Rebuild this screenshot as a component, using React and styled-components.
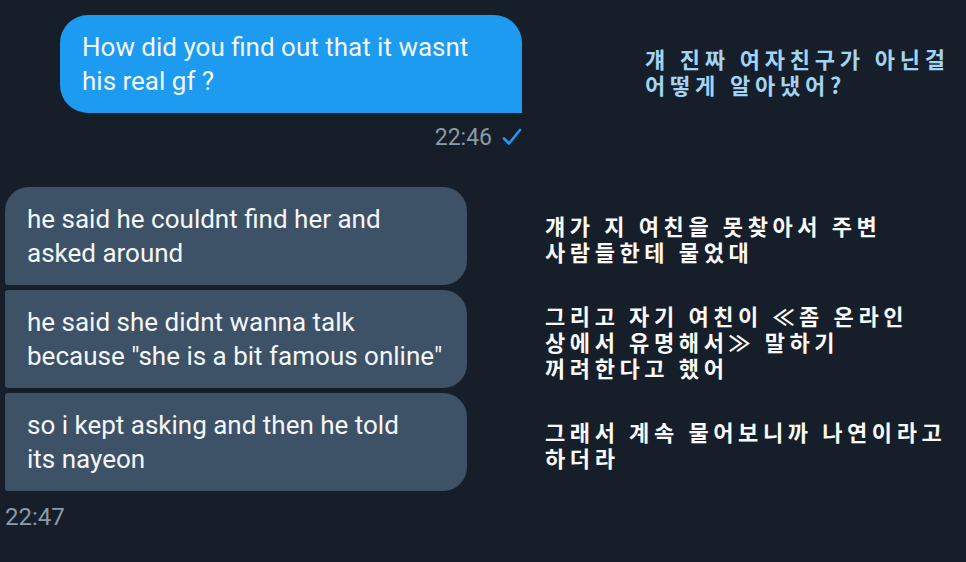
import React from "react";
import styled, { createGlobalStyle } from "styled-components";

const Global = createGlobalStyle`
  html, body { margin: 0; padding: 0; background: #161f29; }
  body { width: 966px; height: 562px; overflow: hidden; }
`;

const Page = styled.div`
  width: 966px;
  height: 562px;
  box-sizing: border-box;
  padding: 15px 0 0 5px;
  background: #161f29;
  font-family: Roboto, "Liberation Sans", sans-serif;
  display: flex;
  flex-direction: column;
`;

const Row = styled.div`
  display: flex;
  align-items: center;
`;

const Bubble = styled.div`
  box-sizing: border-box;
  width: 462px;
  min-height: 98px;
  padding: 15px 14px 15px 22px;
  font-size: 26px;
  line-height: 34px;
  color: #f4f7fa;
  background: ${(p) => (p.$sent ? "#1d9bf0" : "#3d5266")};
  margin-left: ${(p) => (p.$sent ? "55px" : "0")};
  border-radius: ${(p) =>
    p.$sent ? "28px 28px 0 28px" : p.$first ? "24px 24px 24px 3px" : "3px 24px 24px 3px"};
`;

const Translation = styled.div`
  font-family: "Noto Sans CJK KR", sans-serif;
  font-weight: 700;
  font-size: 22px;
  line-height: 26px;
  letter-spacing: ${(p) => p.$ls}px;
  white-space: nowrap;
  color: ${(p) => (p.$blue ? "#a3d4f6" : "#fafafa")};
  margin-left: ${(p) => p.$offset}px;
  margin-top: ${(p) => p.$shift || 0}px;
`;

const Meta = styled.div`
  width: 517px;
  display: flex;
  justify-content: flex-end;
  align-items: center;
  gap: 10px;
  margin-top: 10px;
  height: 28px;
  font-size: 23px;
  color: #8b9aa7;
`;

const Stack = styled.div`
  display: flex;
  flex-direction: column;
  gap: 5px;
  margin-top: 36px;
`;

const Time = styled.div`
  margin-top: 12px;
  font-size: 24px;
  line-height: 28px;
  color: #8b9aa7;
`;

const Check = () => (
  <svg width="20" height="18" viewBox="0 0 20 18" fill="none">
    <path d="M2 10.5 L7 15.5 L18 2" stroke="#1d9bf0" strokeWidth="2.6" strokeLinecap="round" strokeLinejoin="round" />
  </svg>
);

const received = [
  {
    en: ["he said he couldnt find her and", "asked around"],
    ko: ["걔가 지 여친을 못찾아서 주변", "사람들한테 물었대"],
  },
  {
    en: ["he said she didnt wanna talk", 'because "she is a bit famous online"'],
    ko: ["그리고 자기 여친이 ≪좀 온라인", "상에서 유명해서≫ 말하기", "꺼려한다고 했어"],
  },
  {
    en: ["so i kept asking and then he told", "its nayeon"],
    ko: ["그래서 계속 물어보니까 나연이라고", "하더라"],
  },
];

const Lines = ({ lines }) =>
  lines.map((l, i) => (
    <React.Fragment key={i}>
      {l}
      {i < lines.length - 1 && <br />}
    </React.Fragment>
  ));

export default function App() {
  return (
    <>
      <Global />
      <Page>
        <Row>
          <Bubble $sent>
            <Lines lines={["How did you find out that it wasnt", "his real gf ?"]} />
          </Bubble>
          <Translation $blue $offset={123} $shift={14} $ls={4.8}>
            <Lines lines={["걔 진짜 여자친구가 아닌걸", "어떻게 알아냈어?"]} />
          </Translation>
        </Row>
        <Meta>
          <span>22:46</span>
          <Check />
        </Meta>
        <Stack>
          {received.map((m, i) => (
            <Row key={i}>
              <Bubble $first={i === 0}>
                <Lines lines={m.en} />
              </Bubble>
              <Translation $offset={78} $shift={3} $ls={4.6}>
                <Lines lines={m.ko} />
              </Translation>
            </Row>
          ))}
        </Stack>
        <Time>22:47</Time>
      </Page>
    </>
  );
}
